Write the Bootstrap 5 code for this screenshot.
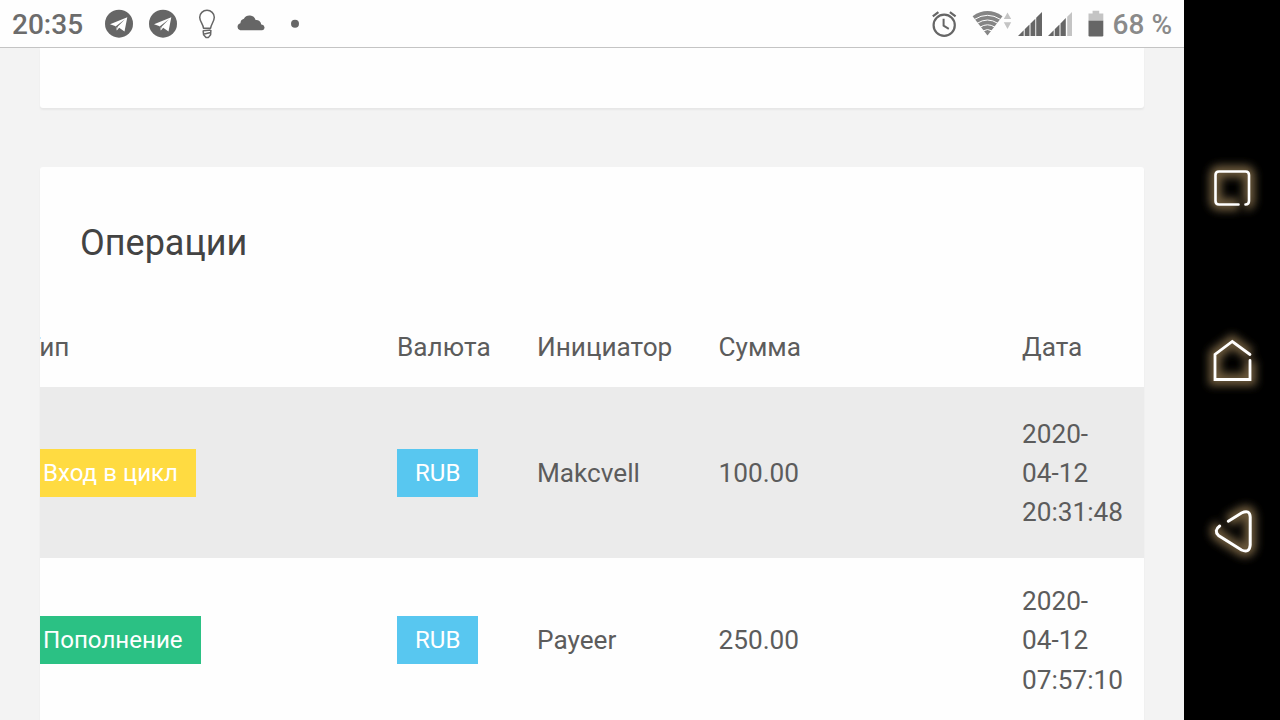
<!DOCTYPE html>
<html lang="ru">
<head>
  <meta charset="UTF-8">
  <meta name="viewport" content="width=device-width, initial-scale=1">
  <title>Операции</title>
  <link href="https://cdn.jsdelivr.net/npm/bootstrap@5.3.3/dist/css/bootstrap.min.css" rel="stylesheet">
  <style>
    body {
      height: 720px;
      font-family: Roboto, "Noto Sans", sans-serif;
      font-size: 26.2px;
      color: #5c5c5c;
      background: #f3f3f3;
    }
    .status-bar {
      height: 48px;
      flex: none;
      background: #fefefe;
      border-bottom: 1px solid #c4c4c4;
      font-size: 28px;
      font-weight: 500;
      line-height: 47px;
      color: #6c6c6c;
    }
    .status-bar svg { display: block; flex: none; }
    .clock { padding: 1px 0 0 12px; width: 96px; height: 47px; }
    .battery-level { padding-top: 1px; height: 47px; color: #8a8a8a; }
    .page-body { padding: 0 40px; }
    .panel {
      background: #fefefe;
      border-radius: 3px;
      box-shadow: 0 2px 2px rgba(0, 0, 0, .05);
    }
    .panel-prev { height: 60px; flex: none; margin-bottom: 59px; border-radius: 0 0 3px 3px; }
    .panel-title {
      font-size: 36px;
      font-weight: 400;
      line-height: 44px;
      color: #434343;
      padding: 54px 40px 0;
      height: 140px;
      margin: 0;
    }
    /* the table is scrolled a little to the right on a narrow screen */
    .ops-table {
      width: 1139px;
      margin: 0 0 0 -35px;
      table-layout: fixed;
      line-height: 39.3px;
    }
    .ops-table > :not(caption) > * > * {
      padding: 2px 0 0 20px;
      border: 0;
      vertical-align: middle;
      font-weight: 400;
      box-shadow: none;
      background: transparent;
      color: #5c5c5c;
    }
    .ops-table > tbody > tr > .tag-cell { padding-top: 0; }
    .ops-table thead tr { height: 80px; }
    .ops-table tbody tr { height: 164px; }
    .ops-table tbody tr.row-alt { height: 171px; background: #ebebeb; }
    .tag {
      display: inline-block;
      height: 48px;
      padding: 0 18px;
      font-size: 24.1px;
      line-height: 49px;
      color: #fff;
      vertical-align: middle;
    }
    .tag-yellow { background: #ffdb41; }
    .tag-green { background: #2bc184; }
    .tag-blue { background: #58c7f0; }
    .nav-strip { width: 96px; flex: none; background: #000; padding-top: 140px; }
    .nav-strip svg { display: block; margin-bottom: 76px; }
  </style>
</head>
<body class="d-flex overflow-hidden">

  <div class="d-flex flex-column flex-grow-1 overflow-hidden">

    <header class="status-bar d-flex justify-content-between">
      <div class="d-flex">
        <span class="clock">20:35</span>
        <svg width="212" height="47" viewBox="96 0 212 47" fill="#666">
          <g id="tg">
            <circle cx="119" cy="23.7" r="14"/>
            <path d="M110 24.2 127.3 17.3 124.5 31.4 119.2 27.8 116.8 30.6 115.7 26.2z" fill="#fff"/>
            <path d="M115.9 26.2 125 19.3 117.6 26.8 116.9 29.6z" fill="#666"/>
          </g>
          <use href="#tg" x="44"/>
          <g fill="none" stroke="#666" stroke-width="1.5" stroke-linejoin="round">
            <path d="M203.5 28.2C203 24 199.7 21.3 199.7 17.3A7.3 7 0 0 1 214.3 17.3C214.3 21.3 211 24.5 210.6 28.2z"/>
            <path d="M203.2 30.8 210.6 30M203.4 34.2 210.6 32.6M203.1 30.5 203.6 34.8 206 37.4H208.5L210.6 34.8 210.9 30"/>
          </g>
          <path d="M240.2 30.3A3.6 3.6 0 0 1 240.4 23.3 4.8 4.8 0 0 1 243.9 18.8 6.4 6.4 0 0 1 255.6 20 4.8 4.8 0 0 1 261.2 24.4 3 3 0 0 1 262.2 30.3z"/>
          <circle cx="295" cy="23.8" r="4"/>
        </svg>
      </div>
      <div class="d-flex">
        <svg width="183" height="47" viewBox="930 0 183 47" fill="#666">
          <g fill="none" stroke="#666" stroke-width="2.2">
            <circle cx="944.2" cy="25.2" r="10.6"/>
            <path d="M943.6 18.8V25.7L948.8 28.8" stroke-width="2"/>
            <path d="M932.8 16.4 938.4 12.2M949.9 12.2 955.6 16.4"/>
          </g>
          <!-- wifi -->
          <path d="M972.6 16.2Q987.5 6 1002.5 16.2L987.5 35.6z" fill="#858585"/>
          <g fill="none" stroke="#fefefe" stroke-width="1">
            <path d="M974.5 19.4Q987.5 11.2 1000.5 19.4M977 23.4Q987.5 16.6 998 23.4M980 27.2Q987.5 22.4 995 27.2M983 31Q987.5 28 992 31"/>
          </g>
          <path d="M1003.8 19 1007.5 12.4 1011.2 19zM1003.8 22.3H1011.2L1007.5 29z" fill="#c4c4c4"/>
          <!-- signal -->
          <path d="M1018 36 1023.7 30.3V36zM1024.7 36V29.3L1029.5 24.5V36zM1030.5 36V23.5L1035.3 18.7V36zM1036.2 36V17.7L1042 11.9V36z"/>
          <path d="M1048 36 1053.7 30.3V36zM1054.7 36V29.3L1059.5 24.5V36zM1060.5 36V23.5L1065.8 18V36z"/>
          <path d="M1067.2 36V16.7L1072 11.9V36z" fill="#c4c4c4"/>
          <!-- battery -->
          <path d="M1088.5 21V13.4H1092.6V10.8H1099.2V13.4H1103.3V21z" fill="#c4c4c4"/>
          <path d="M1088.5 20.8H1103.3V35.3Q1103.3 36.5 1102.1 36.5H1089.7Q1088.5 36.5 1088.5 35.3z"/>
        </svg>
        <span class="battery-level pe-2 me-1">68 %</span>
      </div>
    </header>

    <main class="page-body d-flex flex-column flex-grow-1 overflow-hidden">
      <section class="panel panel-prev"></section>

      <section class="panel flex-grow-1">
        <h2 class="panel-title">Операции</h2>
        <div class="overflow-hidden">
          <table class="table ops-table">
            <colgroup>
              <col style="width: 372px">
              <col style="width: 140px">
              <col style="width: 181.5px">
              <col style="width: 303.5px">
              <col>
            </colgroup>
            <thead>
              <tr>
                <th>Тип</th>
                <th>Валюта</th>
                <th>Инициатор</th>
                <th>Сумма</th>
                <th>Дата</th>
              </tr>
            </thead>
            <tbody>
              <tr class="row-alt">
                <td class="tag-cell"><span class="tag tag-yellow">Вход в цикл</span></td>
                <td class="tag-cell"><span class="tag tag-blue">RUB</span></td>
                <td>Makcvell</td>
                <td>100.00</td>
                <td>2020-<br>04-12<br>20:31:48</td>
              </tr>
              <tr>
                <td class="tag-cell"><span class="tag tag-green">Пополнение</span></td>
                <td class="tag-cell"><span class="tag tag-blue">RUB</span></td>
                <td>Payeer</td>
                <td>250.00</td>
                <td>2020-<br>04-12<br>07:57:10</td>
              </tr>
            </tbody>
          </table>
        </div>
      </section>
    </main>
  </div>

  <!-- system navigation keys with a warm glow -->
  <nav class="nav-strip">
    <svg width="96" height="96" viewBox="0 0 96 96" fill="none">
      <defs>
        <filter id="glow" x="-50%" y="-50%" width="200%" height="200%"><feGaussianBlur stdDeviation="4.2"/></filter>
      </defs>
      <path d="M54.5 64.5H35Q31.5 64.5 31.5 61V35Q31.5 31.5 35 31.5H61.5Q65 31.5 65 35V61Q65 64.5 61.5 64.5" stroke="#6e5c3e" stroke-width="12" filter="url(#glow)"/>
      <path d="M54.5 64.5H35Q31.5 64.5 31.5 61V35Q31.5 31.5 35 31.5H61.5Q65 31.5 65 35V61Q65 64.5 61.5 64.5" stroke="#fff" stroke-width="2.6" stroke-linecap="round"/>
    </svg>
    <svg width="96" height="96" viewBox="0 0 96 96" fill="none">
      <path d="M66 42.5 48.3 29.5 31 42.5V67.5H66V48.5" stroke="#6e5c3e" stroke-width="12" filter="url(#glow)"/>
      <path d="M66 42.5 48.3 29.5 31 42.5V67.5H66V48.5" stroke="#fff" stroke-width="2.8" stroke-linecap="round"/>
    </svg>
    <svg width="96" height="96" viewBox="0 0 96 96" fill="none">
      <path d="M44.3 37.2 57.5 29Q65.8 25 66.2 33V61Q65.5 69.5 57.5 66L34.5 51.5Q29.5 46.5 35.7 42" stroke="#6e5c3e" stroke-width="12" filter="url(#glow)"/>
      <path d="M44.3 37.2 57.5 29Q65.8 25 66.2 33V61Q65.5 69.5 57.5 66L34.5 51.5Q29.5 46.5 35.7 42" stroke="#fff" stroke-width="3" stroke-linecap="round"/>
    </svg>
  </nav>

  <script src="https://cdn.jsdelivr.net/npm/bootstrap@5.3.3/dist/js/bootstrap.bundle.min.js"></script>
</body>
</html>
